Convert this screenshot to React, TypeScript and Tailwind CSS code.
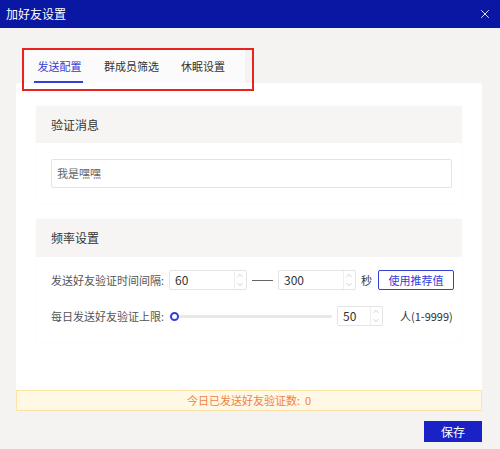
import React from "react";
import { X, ChevronUp, ChevronDown } from "lucide-react";

function NumberBox({ value, width }: { value: string; width: string }) {
  return (
    <div className={`flex h-[20px] shrink-0 items-stretch rounded-[2px] border border-[#e4e4e4] bg-white ${width}`}>
      <span className="flex flex-1 items-center pl-[5px] text-[12px] text-[#333]">{value}</span>
      <div className="flex w-[12px] flex-col border-l border-[#eee] text-[#aaa]">
        <ChevronUp className="h-[9px] w-[10px]" strokeWidth={1.5} />
        <ChevronDown className="h-[9px] w-[10px]" strokeWidth={1.5} />
      </div>
    </div>
  );
}

export default function App() {
  return (
    <div
      className="relative flex h-[449px] w-[500px] flex-col overflow-hidden whitespace-nowrap bg-[#f4f3f2]"
      style={{ fontFamily: '"Noto Sans CJK SC", "Noto Sans", sans-serif' }}
    >
      {/* title bar */}
      <div className="flex h-[28px] shrink-0 items-center justify-between bg-[#0a17a2] pl-[6px] pr-[8px] text-white">
        <span className="text-[12px]">加好友设置</span>
        <X className="h-[14px] w-[14px]" strokeWidth={1.5} />
      </div>

      <div className="flex flex-1 flex-col pl-[16px] pr-[18px] pt-[22px]">
        {/* tabs */}
        <div className="ml-[9px] flex h-[33px] w-[220px] items-stretch bg-[#fbfbfb] pl-[9px] text-[11px]">
          <div className="flex w-[49px] flex-col items-center justify-center border-b-2 border-[#3340d6] pt-[2px] pl-[2px] text-[#3340d6]">发送配置</div>
          <div className="ml-[21px] flex items-center text-[#333]">群成员筛选</div>
          <div className="ml-[22px] flex items-center text-[#333]">休眠设置</div>
        </div>

        {/* white card */}
        <div className="flex h-[307px] flex-col gap-[15px] rounded-t-[2px] bg-white px-[20px] pt-[23px]">
          <div className="flex flex-col rounded-[3px] shadow-[0_0_2px_rgba(0,0,0,0.06)]">
            <div className="flex h-[37px] items-center bg-[#f6f5f4] px-[15px] text-[12px] text-[#333]">验证消息</div>
            <div className="pb-[16px] pl-[15px] pr-[10px] pt-[16px]">
              <div className="flex h-[29px] items-center rounded-[2px] border border-[#e4e4e4] px-[5px] text-[11px] text-[#666]">
                我是嘿嘿
              </div>
            </div>
          </div>

          <div className="flex flex-col rounded-[3px] shadow-[0_0_2px_rgba(0,0,0,0.06)]">
            <div className="flex h-[38px] items-center bg-[#f6f5f4] px-[15px] text-[12px] text-[#333]">频率设置</div>
            <div className="flex flex-col gap-[16px] px-[15px] pb-[16px] pt-[13px] text-[11px] text-[#555]">
              <div className="flex items-center">
                <span className="w-[118px] shrink-0">发送好友验证时间间隔:</span>
                <NumberBox value="60" width="w-[78px]" />
                <span className="mx-[5px] h-px w-[21px] shrink-0 bg-[#666]" />
                <NumberBox value="300" width="w-[78px]" />
                <span className="ml-[5px] text-[#333]">秒</span>
                <button className="ml-[6px] h-[20px] w-[76px] shrink-0 rounded-[2px] border border-[#3340d6] text-[11px] text-[#3340d6]">
                  使用推荐值
                </button>
              </div>
              <div className="flex items-center">
                <span className="w-[118px] shrink-0">每日发送好友验证上限:</span>
                <div className="relative flex w-[163px] shrink-0 items-center">
                  <div className="h-[3px] w-full rounded bg-[#e8e8e8]" />
                  <div className="absolute left-[1px] h-[9px] w-[9px] rounded-full border-2 border-[#3340d6] bg-white" />
                </div>
                <div className="ml-[5px]">
                  <NumberBox value="50" width="w-[46px]" />
                </div>
                <span className="ml-[17px] text-[11px] text-[#333]">人(1-9999)</span>
              </div>
            </div>
          </div>
        </div>

        {/* notice */}
        <div className="flex h-[21px] w-[466px] items-center justify-center border border-[#fde3a6] bg-[#fff8e4] text-[11px] text-[#f0814a]">
          今日已发送好友验证数:&nbsp;&nbsp;0
        </div>

        <div className="flex justify-end pt-[10px]">
          <button className="h-[21px] w-[58px] bg-[#1a22c6] text-[12px] text-white">保存</button>
        </div>
      </div>

      {/* annotation */}
      <div className="pointer-events-none absolute left-[22px] top-[48px] h-[43px] w-[232px] border-2 border-[#e8231f]" />
    </div>
  );
}
